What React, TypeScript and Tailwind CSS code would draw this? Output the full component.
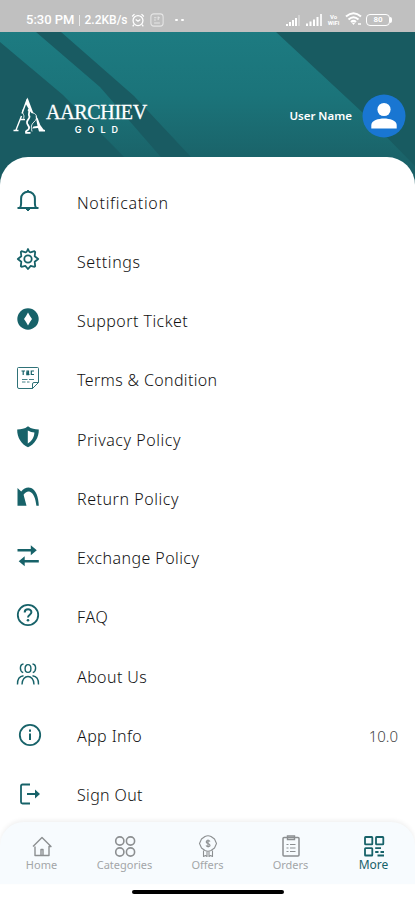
import { ReactElement, ReactNode } from 'react'

type MenuItem = {
    label: string
    tracking: string
    icon: ReactElement
    iconClass: string
    value?: string
}

type IconProps = {
    children: ReactNode
    className?: string
}

function Icon({ children, className = "size-6" }: IconProps) {
    return (
        <svg viewBox="0 0 24 24" className={`shrink-0 ${className}`} fill="none" stroke="currentColor" strokeWidth="1.8">
            {children}
        </svg>
    )
}

const menuItems: MenuItem[] = [
    {
        label: "Notification",
        tracking: "tracking-[0.7px]",
        iconClass: "-mt-[4px]",
        icon: <Icon>
            <path strokeWidth="2" d="M1.5 19H22.5M3.8 19C4.9 17.7 5.1 16.5 5.1 14.5V9.5C5.1 5.7 8 2.7 12 2.7S18.9 5.7 18.9 9.5V14.5C18.9 16.5 19.1 17.7 20.2 19" />
            <path d="M9.5 19.5H14.5L12 22Z" fill="currentColor" strokeWidth="1" />
            <path d="M12 1V3" />
        </Icon>,
    },
    {
        label: "Settings",
        tracking: "tracking-[0.6px]",
        iconClass: "-mt-[5px]",
        icon: <Icon>
            <path strokeLinejoin="round" d="M12 2Q13.3 5.3 14.4 5.3L18.5 4.2Q19.4 4.6 19.1 5.5L18.7 9.2L22.2 12L18.7 14.8L19.1 18.5Q19.4 19.4 18.5 19.8L14.7 18.9L12 22L9.3 18.9L5.5 19.8Q4.6 19.4 4.9 18.5L5.3 14.8L1.8 12L5.3 9.2L4.9 5.5Q4.6 4.6 5.5 4.2L9.6 5.3Q10.7 5.3 12 2Z" />
            <circle cx="12" cy="12" r="3.7" />
        </Icon>,
    },
    {
        label: "Support Ticket",
        tracking: "tracking-[0.46px]",
        iconClass: "-mt-[5px]",
        icon: <Icon>
            <circle cx="12" cy="12" r="10.7" fill="currentColor" stroke="none" />
            <path d="M12 5.5Q13.5 8.5 16 12Q13.5 15.5 12 18.5Q10.500 15.5 8 12Q10.5 8.5 12 5.5Z" fill="#fff" stroke="none" />
        </Icon>,
    },
    {
        label: "Terms & Condition",
        tracking: "tracking-[0.35px]",
        iconClass: "-mt-[5px]",
        icon: <Icon>
            <path strokeWidth="0.9" d="M2.5 1.5H21.5Q22.5 1.5 22.5 2.5V16.5L16.5 22.5H3Q1.5 22.5 1.5 21V2.5Q1.5 1.5 2.5 1.5ZM22.5 16.5H18Q16.5 16.5 16.5 18V22.5" />
            <path strokeWidth="1.2" d="M5.5 5H9M7.2 5V9M12.8 8.6H10.8V6.8H12.5V5H11V6.8L13.4 8.8M18 5H15.3V8.5H18" />
            <path strokeWidth="0.8" d="M6 13.5H11.5M13 13.5H18M6 16H9.5M11 16H13.5" />
        </Icon>,
    },
    {
        label: "Privacy Policy",
        tracking: "tracking-[0.56px]",
        iconClass: "-mt-[5px]",
        icon: <Icon>
            <path fill="currentColor" stroke="none" d="M12 1.2C15.5 4 18.8 4.3 22.8 4.5C23 12.5 18.5 19.5 12 22.3C5.5 19.5 1 12.5 1.2 4.5C5.2 4.3 8.5 4 12 1.2Z" />
            <path fill="#fff" stroke="none" d="M11.8 5.5C14 6.8 16.2 7.3 18.4 7.5C18.2 12.5 15.8 16.3 11.8 18.5Z" />
        </Icon>,
    },
    {
        label: "Return Policy",
        tracking: "tracking-[0.55px]",
        iconClass: "-mt-[4px]",
        icon: <Icon>
            <path fill="currentColor" stroke="none" d="M1.5 3L5.2 6.5C8 2.8 12 1.7 15.2 3C20 5 22.5 12 22.8 20.8H20.4C19.5 13.5 17.8 8.2 13.8 6.7C11.5 6 9 7.5 7.6 9.7L10.5 20.8H1.5Z" />
        </Icon>,
    },
    {
        label: "Exchange Policy",
        tracking: "tracking-[0.43px]",
        iconClass: "-mt-[5px]",
        icon: <Icon>
            <path strokeWidth="2.4" d="M1.5 6.3H18M6 17.2H22.8" />
            <path fill="currentColor" stroke="none" d="M14.8 1.3L20.8 6.3L14.8 11.3ZM8.7 12.2L2.7 17.2L8.7 22.2Z" />
        </Icon>,
    },
    {
        label: "FAQ",
        tracking: "tracking-[0.6px]",
        iconClass: "-mt-[5px]",
        icon: <Icon>
            <circle cx="12" cy="12" r="10.2" />
            <path strokeWidth="2" d="M8.7 9.5C8.7 5.3 15.4 5.3 15.4 9.3C15.4 11.7 12 11.7 12 14.5" />
            <circle cx="12" cy="17.2" r="1.3" fill="currentColor" stroke="none" />
        </Icon>,
    },
    {
        label: "About Us",
        tracking: "tracking-[0.4px]",
        iconClass: "-mt-[6px]",
        icon: <Icon>
            <g strokeWidth="1.4">
                <ellipse cx="12" cy="6.5" rx="2.9" ry="3.9" />
                <path d="M7.5 2C3.4 2.5 3.4 9 7.2 10.7M16.5 2C20.6 2.5 20.6 9 16.8 10.7" />
                <path d="M6 22.5C6 11.8 18 11.8 18 22.5M1.5 22.5C1.3 17.5 3.2 14.2 7.5 13.7M22.5 22.5C22.7 17.5 20.8 14.2 16.5 13.7" />
            </g>
        </Icon>,
    },
    {
        label: "App Info",
        tracking: "tracking-[0.4px]",
        iconClass: "pl-[2px] -mt-[1px]",
        value: "10.0",
        icon: <Icon>
            <circle cx="12" cy="12" r="10.2" />
            <path strokeWidth="2" d="M12 10.5V17M12 6.5V8.7" />
        </Icon>,
    },
    {
        label: "Sign Out",
        tracking: "tracking-[0.35px]",
        iconClass: "pl-[2px] -mt-[2px]",
        icon: <Icon>
            <path d="M12 2.5H4.5Q3 2.5 3 4V20Q3 21.5 4.5 21.5H12M9 12H19" />
            <path fill="currentColor" stroke="none" d="M17 7.5L22 12L17 16.5Z" />
        </Icon>,
    },
]

const tabs = [
    {
        label: "Home",
        icon: <Icon>
            <path strokeLinejoin="round" strokeWidth="1.4" d="M3 12.5L12 3.5L21 12.5H19V21.5H5V12.5M11 21.5V15.5H13V21.5" />
        </Icon>,
    },
    {
        label: "Categories",
        icon: <Icon>
            <g strokeWidth="1.6">
                <circle cx="6.8" cy="7" r="4.1" />
                <circle cx="17.5" cy="7" r="4.1" />
                <circle cx="6.8" cy="18" r="4.1" />
                <circle cx="17.5" cy="18" r="4.1" />
            </g>
        </Icon>,
    },
    {
        label: "Offers",
        icon: <Icon>
            <g strokeWidth="1.1" strokeLinejoin="round">
                <path d="M9 2.5Q12 1 15 2.5L18.5 5L20.5 9.5L18.5 14L15 16.5Q12 18 9 16.5L5.5 14L3.5 9.5L5.5 5Z" />
                <path d="M14 7.5C13.3 6.2 10.2 6.2 10.2 8S14 9.2 14 11.2S10.7 12.8 10 11.5M12 5.5V13.5" />
                <path d="M7.5 16.5V22.5L9.5 21.5L11 22.5V17.5M16.5 16.5V22.5L14.5 21.5L13 22.5V17.5" />
            </g>
        </Icon>,
    },
    {
        label: "Orders",
        icon: <Icon>
            <rect x="4" y="3.5" width="16" height="18.5" rx="1" strokeWidth="1.5" />
            <path d="M8.5 2H15.5V5.5H8.5Z" strokeWidth="1.4" />
            <path strokeWidth="1.2" d="M7.5 10.5H9.5M11 10.5H16.5M7.5 14H9.5M11 14H16.5M7.5 17.5H9.5M11 17.5H16.5" />
        </Icon>,
    },
    {
        label: "More",
        active: true,
        icon: <Icon>
            <g strokeWidth="1.8">
                <rect x="3" y="3" width="7.3" height="7.3" rx="0.6" />
                <rect x="14" y="3" width="7.3" height="7.3" rx="0.6" />
                <rect x="3" y="14.2" width="7.3" height="7.3" rx="0.6" />
                <path d="M13.2 14.2H19M13.2 18H16.5M18.5 18H22M15.5 21.5H22" />
            </g>
        </Icon>,
    },
]

function StatusBar() {
    return (
        <div className="flex h-8 shrink-0 items-end justify-between bg-[#c0c0c0] pb-[4px] pl-[26px] pr-[23px] font-['Roboto',sans-serif] text-white">
            <div className="flex items-center">
                <span className="text-[13px] leading-4 font-medium whitespace-nowrap">5:30 PM</span>
                <span className="mr-[5px] ml-1 h-[11px] w-px bg-white/70" />
                <span className="text-[12px] leading-4 font-medium whitespace-nowrap">2.2KB/s</span>
                <Icon className="ml-[3px] size-[14px]">
                    <circle cx="12" cy="13" r="8.5" strokeWidth="2.2" />
                    <path strokeWidth="2.2" d="M2 6L6 2M22 6L18 2M8 11L12 14L16 11M5 20L3 23M19 20L21 23" />
                </Icon>
                <Icon className="ml-[5px] size-[14px] opacity-60">
                    <rect x="1.5" y="1.5" width="21" height="21" rx="5" />
                    <path d="M7 8H11M13 8H17M7 12H10M14 6V12M7 17H17" />
                </Icon>
                <span className="ml-[11px] h-[2px] w-[3px] rounded-full bg-white" />
                <span className="ml-[3px] h-[2px] w-[3px] rounded-full bg-white" />
            </div>
            <div className="mb-[2px] flex items-end">
                <svg viewBox="0 0 15 11" className="h-[11px] w-[15px]" fill="#fff">
                    <path d="M0 9H2V11H0ZM3 7H5V11H3ZM6 5H8V11H6ZM9 3H11V11H9Z" />
                    <path d="M12 0H14V11H12Z" opacity="0.3" />
                </svg>
                <svg viewBox="0 0 17 12" className="ml-[5px] h-3 w-[17px]" fill="#fff">
                    <path d="M0 9.5H2V12H0ZM3.5 7.5H5.5V12H3.5ZM7 5.5H9V12H7ZM10.5 3H12.5V12H10.5Z" />
                    <path d="M14 0H16V12H14Z" opacity="0.8" />
                </svg>
                <span className="ml-[3px] flex w-[15px] flex-col items-center text-[6px] leading-[6px] font-bold">
                    <span>Vo</span>
                    <span>WiFi</span>
                </span>
                <svg viewBox="0 0 18 14" className="ml-1 h-[14px] w-[18px]" fill="none" stroke="#fff" strokeWidth="2">
                    <path d="M1 4.5Q8.5 -2 16 4.5M3.5 7.5Q8.5 3 13.5 7.5M6 10Q8.5 7.8 11 10" />
                    <path d="M8.5 13L6.8 10.8H10.2Z" fill="#fff" stroke="none" />
                    <path d="M13 12H16" strokeWidth="1.5" />
                </svg>
                <span className="ml-[3px] flex h-3 w-6 items-center justify-center rounded-[4px] border-[1.5px] border-white text-[8px] leading-none font-bold">80</span>
                <span className="mb-[3px] h-[6px] w-[2px] rounded-r bg-white" />
            </div>
        </div>
    )
}

function HeaderBackdrop() {
    return (
        <svg viewBox="0 0 415 158" className="absolute inset-0 h-[158px] w-full" preserveAspectRatio="none">
            <defs>
                <linearGradient id="teal" x1="0" y1="0" x2="0" y2="1">
                    <stop offset="0" stopColor="#1d7b81" />
                    <stop offset="0.4" stopColor="#1b747a" />
                    <stop offset="0.8" stopColor="#1a6369" />
                    <stop offset="1" stopColor="#185a61" />
                </linearGradient>
            </defs>
            <rect width="415" height="158" fill="url(#teal)" />
            <path d="M0 10L63 63L124 125L140 158H0Z" fill="#195b62" />
            <path d="M36 0H61L134 64L190 124L200 158H190L160 124L100 55Z" fill="#195b62" />
            <path d="M276 0H415V134L362 80Z" fill="#185b61" />
        </svg>
    )
}

function Logo() {
    return (
        <div className="flex items-center text-white">
            <svg viewBox="0 0 32 38" className="h-[38px] w-8" fill="none" stroke="currentColor">
                <path fill="currentColor" stroke="none" d="M14.5 0.5L20.5 16.5L17.5 15L12.5 6.5Z" />
                <path strokeWidth="1.4" d="M14.3 2L9 16.5M8.5 19L3 33M0.5 33.5H5.5M7 22.5H12" />
                <path strokeWidth="1.8" d="M15 12.5C18 14 15 16.5 16 18.5C18 20.5 14.5 22 14 25C13.5 28 17 29 16 31.5C15 34.5 12 33 13 35.8H17.5" />
                <path strokeWidth="1" d="M10.5 12C7.5 16.5 12.5 17 10.5 21.5M18 15.5C24 16 25.5 21 21 25C18 27.5 18 30 19 34.5" opacity="0.85" />
                <path fill="currentColor" stroke="none" d="M22.5 19L24.8 21.5Q26.5 28 30.5 32.5L32 33V34.5H26L25 31L19 31.5L20.5 29.5L24.5 29Z" />
            </svg>
            <div className="mt-[4px] ml-[1px] flex flex-col items-center">
                <span className="font-['Liberation_Serif',serif] text-[20px] leading-[19px] tracking-[-0.3px] whitespace-nowrap [-webkit-text-stroke:0.3px_white]">AARCHIEV</span>
                <span className="mt-[3px] pl-[6px] font-['Inter',sans-serif] text-[9px] leading-[9px] font-semibold tracking-[6px]">GOLD</span>
            </div>
        </div>
    )
}

function Header() {
    return (
        <header className="relative h-[125px] shrink-0 bg-[#185b61]">
            <HeaderBackdrop />
            <div className="relative flex items-center justify-between pt-[62px] pr-[9px] pl-[13px]">
                <Logo />
                <div className="flex items-center">
                    <span className="font-['Noto_Sans',sans-serif] text-[11.5px] font-semibold text-white">User Name</span>
                    <svg viewBox="0 0 44 44" className="ml-[10px] size-11">
                        <circle cx="22" cy="22" r="21.5" fill="#1976d2" />
                        <circle cx="22" cy="15.5" r="6.6" fill="#fff" />
                        <path d="M9.3 34.5V31C9.3 26.5 16.5 24.5 22 24.5S34.7 26.5 34.7 31V34.5Z" fill="#fff" />
                    </svg>
                </div>
            </div>
        </header>
    )
}

export default function App() {
    return (
        <div className="flex h-[900px] w-full flex-col overflow-hidden bg-[#185b61] font-['Noto_Sans',sans-serif]">
            <StatusBar />
            <Header />
            <main className="relative min-h-0 flex-1 rounded-t-[28px] bg-white pt-[16px]">
                <ul>
                    {menuItems.map((item) =>
                        <li key={item.label} className="flex h-[59.25px] items-center pr-[17px] pl-4">
                            <span className={`w-[61px] text-[#176269] ${item.iconClass}`}>
                                {item.icon}
                            </span>
                            <span className={`text-[16px] font-light text-[#111] ${item.tracking}`}>{item.label}</span>
                            {item.value && <span className="ml-auto text-[15px] font-light text-[#444]">{item.value}</span>}
                        </li>
                    )}
                </ul>
            </main>
            <footer className="relative h-[78px] shrink-0 bg-white">
                <nav className="flex h-[62px] justify-around rounded-t-[24px] bg-[#f7fbfe] pt-[12px] shadow-[0_-2px_4px_rgba(0,0,0,0.06)]">
                    {tabs.map((tab) =>
                        <div key={tab.label} className={`flex w-[83px] flex-col items-center ${tab.active ? "text-[#176269]" : "text-[#8c8f91]"}`}>
                            {tab.icon}
                            <span className={tab.active ? "text-[12px] leading-[13px]" : "text-[11px] leading-[14px] text-[#a3a6a8]"}>{tab.label}</span>
                        </div>
                    )}
                </nav>
                <div className="mx-auto mt-[6px] h-1 w-[152px] rounded-full bg-black" />
            </footer>
        </div>
    )
}
